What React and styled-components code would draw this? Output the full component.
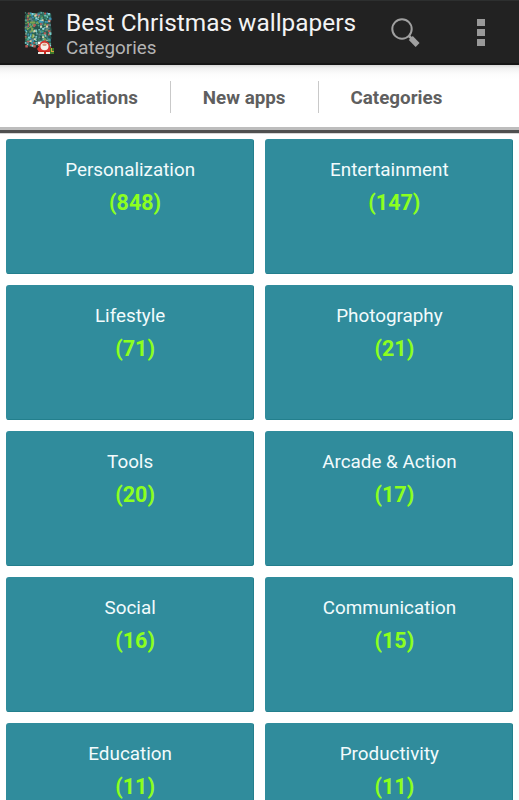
import React from "react";
import styled, { createGlobalStyle } from "styled-components";

const GlobalStyle = createGlobalStyle`
  * {
    box-sizing: border-box;
  }

  body {
    margin: 0;
    background: #ffffff;
    font-family: Roboto, sans-serif;
    overflow: hidden;
  }
`;

const Screen = styled.div`
  height: 800px;
  overflow: hidden;
  display: flex;
  flex-direction: column;
`;

const ActionBar = styled.header`
  flex: none;
  display: flex;
  height: 65px;
  padding-left: 22px;
  background: #222222;
  border-top: 1px solid #2d2f2f;
  border-bottom: 2px solid #161616;
`;

const Titles = styled.div`
  flex: 1;
  margin-left: 8px;
  padding-top: 7px;
  white-space: nowrap;
`;

const Title = styled.h1`
  margin: 0;
  color: #f3f3f3;
  font-size: 24.4px;
  font-weight: 400;
  line-height: 29px;
`;

const Subtitle = styled.p`
  margin: 0;
  color: #b4b4b4;
  font-size: 18.8px;
  line-height: 23px;
`;

const IconButton = styled.button`
  display: flex;
  align-items: center;
  justify-content: center;
  width: 76px;
  height: 62px;
  padding: 0;
  border: 0;
  background: none;
`;

const Tabs = styled.nav`
  flex: none;
  display: flex;
  align-items: center;
  height: 68px;
  padding-bottom: 1px;
  background: linear-gradient(#d8d8d8, #f1f1f1 3px, #fcfcfc 9px, #ffffff 14px);
  border-bottom: 3px solid #4f4f4f;
  box-shadow: inset 0 -3px 0 #bdbdbd, 0 1px 0 #d6d6d6;
`;

const Tab = styled.a`
  padding: 3px 32px 0;
  color: #5f5f5f;
  font-size: 18.8px;
  font-weight: 700;
  line-height: 29px;
  white-space: nowrap;

  &:first-child {
    padding-left: 32.5px;
  }

  & + & {
    border-left: 1px solid #c9c9c9;
  }
`;

const Grid = styled.main`
  display: grid;
  grid-template-columns: 1fr 1fr;
  grid-auto-rows: 135px;
  gap: 11px;
  padding: 6px 6px 0 5.5px;
`;

const Card = styled.section`
  padding: 17px 0 0 1px;
  border-radius: 3px;
  background: #308c9c;
  box-shadow: inset -1px -1px 0 #237f8d;
  text-align: center;
`;

const CardName = styled.h2`
  margin: 0;
  color: #f2fbfc;
  font-size: 18.85px;
  font-weight: 400;
  line-height: 28px;
`;

const CardCount = styled.div`
  padding-left: 10px;
  margin-top: 5px;
  color: #8cff1f;
  font-size: 21.5px;
  font-weight: 700;
  line-height: 27px;
`;

const IconSvg = styled.svg`
  flex: none;
  margin-top: 9px;
`;

const LEAVES = ["#4fa58c", "#76cbc7", "#3a8060", "#b65c55", "#d6d2ab", "#3c95b5", "#7fa552", "#27534b", "#8fd6da", "#5d7d87"];

const leaves = [];
for (let row = 0; row < 16; row++) {
  for (let col = 0; col < 12; col++) {
    const n = (row * row * 37 + col * 53 + row * col * 17) % 101;
    leaves.push({
      x: 2.8 + col * 2.1 + (n % 3) * 0.5,
      y: 2.2 + row * 2.1 + (n % 4) * 0.4,
      size: 1.4 + (n % 4) * 0.4,
      color: LEAVES[n % LEAVES.length],
    });
  }
}

const AppIcon = () => (
  <IconSvg width="36" height="46" viewBox="0 0 36 46">
    <path
      fill="#2a6259"
      d="M5 3q2-1.5 5 0t6-.5 6 .5 6 0q2 1 1 5t0 8 0 8v8l-12 1-3 3q-4 2-8 0-4-2-3-6t0-8 0-8 0-6 2-5z"
    />
    {leaves.map((leaf, i) => (
      <rect key={i} x={leaf.x} y={leaf.y} width={leaf.size} height={leaf.size} rx="0.5" fill={leaf.color} />
    ))}
    <path fill="#d7352f" d="M17 36q1-5 5-5 5 0 6 5l3 4-2 2H17l-2-3z" />
    <circle cx="17" cy="33" r="1.3" fill="#f2eee4" />
    <ellipse cx="22.5" cy="36.5" rx="4" ry="3.7" fill="#f5f1ea" />
    <ellipse cx="22.5" cy="34.8" rx="2.2" ry="1.2" fill="#d99b7d" />
    <path fill="#c8261f" d="M18 41h9v3h-9z" />
    <path fill="#f0ede4" d="M16 42h6v2h-6zM24 42h4v2h-4z" />
    <path fill="#3f7b2b" d="M28 38h4v6h-4z" />
    <path fill="#d8a53c" d="M29 38h1v3h-1zM29 41h3v1h-3z" />
  </IconSvg>
);

const SearchIcon = () => (
  <svg width="32" height="32" viewBox="0 0 32 32">
    <circle cx="13" cy="13" r="9.7" fill="none" stroke="#a0a0a0" strokeWidth="2" />
    <path stroke="#a0a0a0" strokeWidth="2.5" d="M19.5 19.5l3 3" />
    <path stroke="#a0a0a0" strokeWidth="5.5" d="M21.8 22l6.8 7" />
  </svg>
);

const MoreIcon = () => (
  <svg width="8" height="28" viewBox="0 0 8 28" fill="#999999">
    <rect y="1" width="8" height="7" />
    <rect y="11" width="8" height="7" />
    <rect y="21" width="8" height="7" />
  </svg>
);

const categories = [
  { name: "Personalization", count: 848 },
  { name: "Entertainment", count: 147 },
  { name: "Lifestyle", count: 71 },
  { name: "Photography", count: 21 },
  { name: "Tools", count: 20 },
  { name: "Arcade & Action", count: 17 },
  { name: "Social", count: 16 },
  { name: "Communication", count: 15 },
  { name: "Education", count: 11 },
  { name: "Productivity", count: 11 },
];

const App = () => (
  <Screen>
    <GlobalStyle />
    <ActionBar>
      <AppIcon />
      <Titles>
        <Title>Best Christmas wallpapers</Title>
        <Subtitle>Categories</Subtitle>
      </Titles>
      <IconButton aria-label="Search">
        <SearchIcon />
      </IconButton>
      <IconButton aria-label="More options">
        <MoreIcon />
      </IconButton>
    </ActionBar>
    <Tabs>
      <Tab>Applications</Tab>
      <Tab>New apps</Tab>
      <Tab>Categories</Tab>
    </Tabs>
    <Grid>
      {categories.map((category) => (
        <Card key={category.name}>
          <CardName>{category.name}</CardName>
          <CardCount>({category.count})</CardCount>
        </Card>
      ))}
    </Grid>
  </Screen>
);

export default App;
